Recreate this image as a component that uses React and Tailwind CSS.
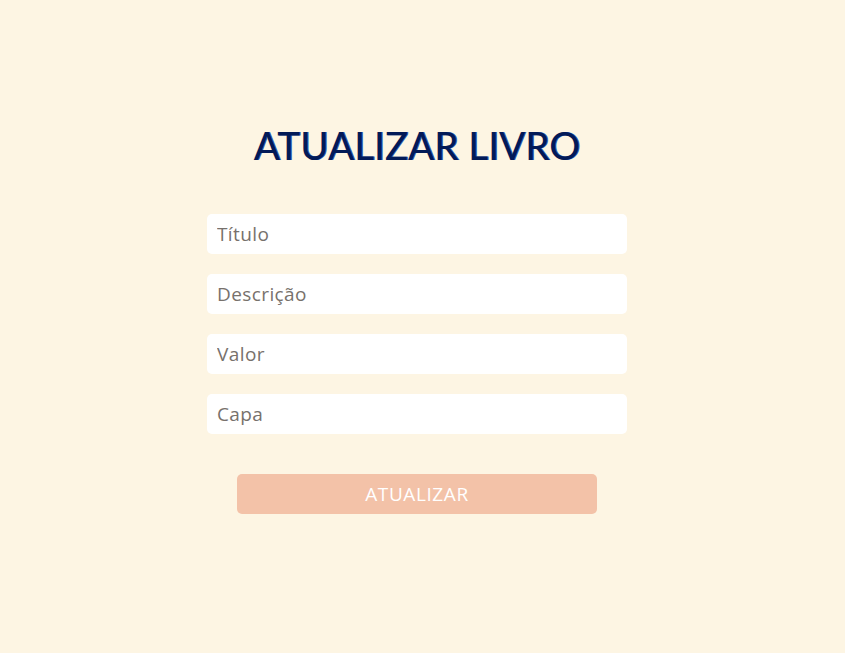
import React from 'react';

const fields = ['Título', 'Descrição', 'Valor', 'Capa'];

const App = () => {
  return (
    <div className="min-h-[653px] w-full bg-[#fdf5e3] font-['Open_Sans',sans-serif]">
      <div className="flex flex-col items-center pt-[122px] pr-[11px]">
        <h1 className="font-['Lato',sans-serif] text-[38.5px] leading-[46px] font-medium text-[#021a57] [text-shadow:1px_0_0_#3a5cb0]">
          ATUALIZAR LIVRO
        </h1>
        <form className="mt-[46px] flex w-[420px] flex-col gap-5">
          {fields.map((label) => (
            <input
              key={label}
              type="text"
              placeholder={label}
              className="h-10 w-full rounded-[5px] bg-white px-[10px] text-[19px] tracking-[0.4px] text-gray-700 outline-none placeholder:text-[#77716c]"
            />
          ))}
          <button
            type="button"
            className="mx-auto mt-5 h-10 w-[360px] rounded-[5px] bg-[#f3c2a8] text-[19px] tracking-[0.6px] text-white"
          >
            ATUALIZAR
          </button>
        </form>
      </div>
    </div>
  );
};

export default App;
